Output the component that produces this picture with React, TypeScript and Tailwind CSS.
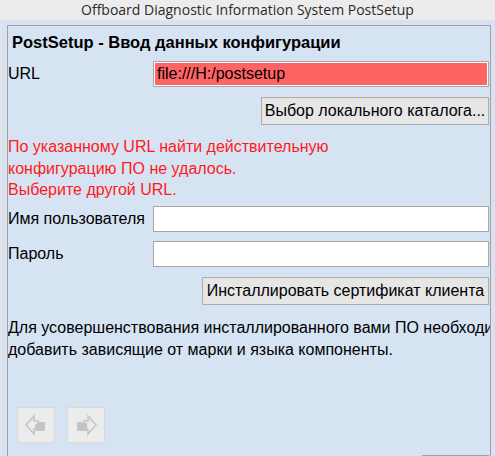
import React from "react";

const font = "font-['Liberation_Sans',Arial,sans-serif]";
const inputClasses =
  "h-[26px] w-[336px] border border-[#a6a6a6] shadow-[inset_0_0_0_1px_#ffffff] px-[3px] text-[16px] text-black outline-none";
const buttonClasses =
  "border border-[#adadad] bg-[#e6e6e6] text-[16px] text-black leading-none";

const BackIcon = () => (
  <svg width="22" height="22" viewBox="0 0 22 22">
    <path
      d="M9 2 L1 11 L9 20 L9 15 L13 15 L13 7 L9 7 Z"
      fill="none"
      stroke="#c4c4c4"
      strokeWidth="1.5"
    />
    <path d="M10 11 L14 8 L20 8 L20 17 L10 17 Z" fill="#c4c4c4" />
  </svg>
);

const ForwardIcon = () => (
  <svg width="22" height="22" viewBox="0 0 22 22">
    <path
      d="M13 2 L21 11 L13 20 L13 15 L9 15 L9 7 L13 7 Z"
      fill="none"
      stroke="#c4c4c4"
      strokeWidth="1.5"
    />
    <path d="M2 8 L7 8 L8 9 L12 9 L12 17 L2 17 Z" fill="#c4c4c4" />
  </svg>
);

const NavButton = ({ children }: { children: React.ReactNode }) => (
  <div className="w-[38px] h-[36px] flex items-center justify-center bg-[#ececec] border border-[#d9d9d9]">
    {children}
  </div>
);

export default function App() {
  return (
    <div className={`w-[495px] h-[456px] overflow-hidden flex flex-col bg-[#d6e3f3] ${font}`}>
      <div className="h-[20px] shrink-0 bg-[#ececec] flex items-center justify-center text-[14px] text-[#2b2b2b] font-['Open_Sans',sans-serif] leading-none">
        Offboard Diagnostic Information System PostSetup
      </div>
      <div className="flex-1 flex border-l-2 border-[#e3e3e3] overflow-hidden">
        <div className="ml-[5px] mt-[5px] w-[484px] shrink-0 border border-[#a0a0a0] border-b-0 text-[16px] text-black">
          <div className="mt-[6px] pl-[4px] font-bold text-[16.5px] leading-[20px]">
            PostSetup - Ввод данных конфигурации
          </div>

          <div className="mt-[9px] flex items-center">
            <span className="w-[145px]">URL</span>
            <input
              className={`${inputClasses} bg-[#ff6464]`}
              defaultValue="file:///H:/postsetup"
            />
          </div>

          <div className="mt-[10px] flex justify-end pr-[1px]">
            <button className={`${buttonClasses} h-[28px] w-[228px]`}>
              Выбор локального каталога...
            </button>
          </div>

          <div className="mt-[11px] text-[#ff1a1a] leading-[21.5px]">
            По указанному URL найти действительную
            <br />
            конфигурацию ПО не удалось.
            <br />
            Выберите другой URL.
          </div>

          <div className="mt-[5px] flex items-center">
            <span className="w-[145px]">Имя пользователя</span>
            <input className={`${inputClasses} bg-white`} />
          </div>

          <div className="mt-[9px] flex items-center">
            <span className="w-[145px]">Пароль</span>
            <input type="password" className={`${inputClasses} bg-white`} />
          </div>

          <div className="mt-[10px] flex justify-end pr-[1px]">
            <button className={`${buttonClasses} h-[28px] w-[287px]`}>
              Инсталлировать сертификат клиента
            </button>
          </div>

          <div className="mt-[12px] leading-[22px] whitespace-nowrap overflow-hidden">
            Для усовершенствования инсталлированного вами ПО необходимо
            <br />
            добавить зависящие от марки и языка компоненты.
          </div>

          <div className="mt-[46px] ml-[9px] flex gap-[12px]">
            <NavButton>
              <BackIcon />
            </NavButton>
            <NavButton>
              <ForwardIcon />
            </NavButton>
          </div>

          <div className="mt-[12px] flex justify-end pr-[1px]">
            <div className="w-[67px] h-[20px] border border-[#a0a0a0] bg-[#e6e6e6]" />
          </div>
        </div>
      </div>
    </div>
  );
}
